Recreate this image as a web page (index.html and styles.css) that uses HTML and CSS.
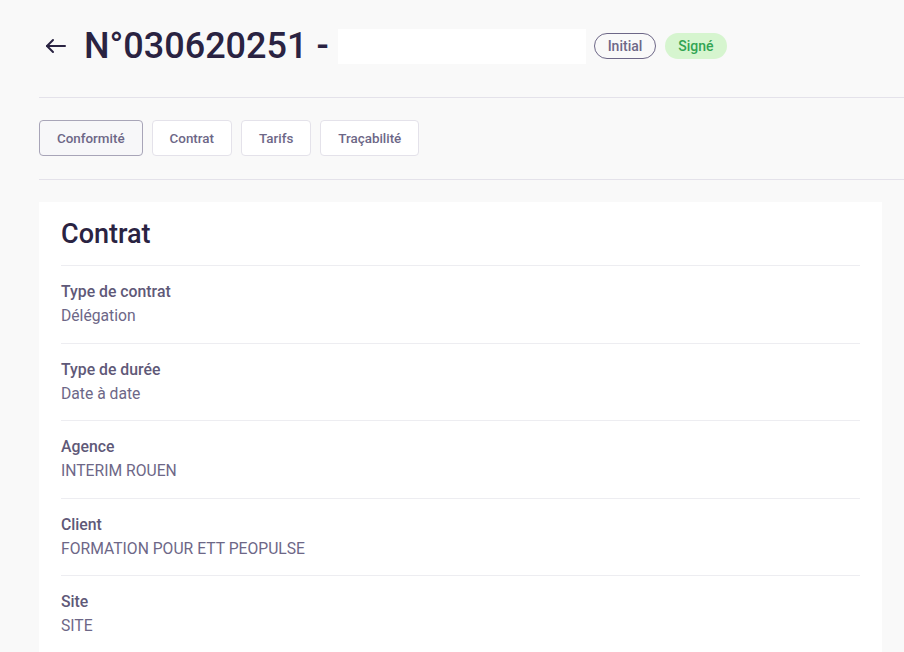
FILE: index.html
```html
<!DOCTYPE html>
<html lang="fr">
<head>
  <meta charset="UTF-8" />
  <meta name="viewport" content="width=device-width, initial-scale=1.0"/>
  <title>Contrat N°030620251</title>
  <link rel="stylesheet" href="styles.css">
</head>
<body>
  <main class="page">
    <header class="page-header">
      <a class="back-link" href="#" aria-label="Retour">
        <svg width="24" height="24" viewBox="0 0 24 24" fill="none" stroke="currentColor" stroke-width="2" stroke-linecap="round" stroke-linejoin="round">
          <line x1="21" y1="12" x2="3" y2="12"/>
          <polyline points="9,6 3,12 9,18"/>
        </svg>
      </a>
      <h1 class="page-title">N°030620251 -</h1>
      <div class="title-input"></div>
      <span class="badge badge-outline">Initial</span>
      <span class="badge badge-success">Signé</span>
    </header>

    <nav class="tabs">
      <button class="tab active">Conformité</button>
      <button class="tab">Contrat</button>
      <button class="tab">Tarifs</button>
      <button class="tab">Traçabilité</button>
    </nav>

    <section class="card">
      <h2 class="card-title">Contrat</h2>
      <div class="field">
        <div class="field-label">Type de contrat</div>
        <div class="field-value">Délégation</div>
      </div>
      <div class="field">
        <div class="field-label">Type de durée</div>
        <div class="field-value">Date à date</div>
      </div>
      <div class="field">
        <div class="field-label">Agence</div>
        <div class="field-value">INTERIM ROUEN</div>
      </div>
      <div class="field">
        <div class="field-label">Client</div>
        <div class="field-value">FORMATION POUR ETT PEOPULSE</div>
      </div>
      <div class="field">
        <div class="field-label">Site</div>
        <div class="field-value">SITE</div>
      </div>
    </section>
  </main>
</body>
</html>
```

FILE: styles.css
```css
:root {
  --bg-color: #f9f9f9;
  --title-color: #2a2342;
  --label-color: #5f5978;
  --value-color: #6d6787;
  --line-color: #e4e2ea;
  --row-line: #ededf1;
}

* {
  margin: 0;
  padding: 0;
  box-sizing: border-box;
  font-family: Roboto, 'Liberation Sans', sans-serif;
}

body {
  background-color: var(--bg-color);
  color: var(--label-color);
  overflow: hidden;
}

.page {
  padding-left: 39px;
}

.page-header {
  display: flex;
  align-items: center;
  height: 98px;
  padding-bottom: 5px;
  border-bottom: 1px solid var(--line-color);
}

.back-link {
  display: flex;
  color: var(--title-color);
  margin-left: 5px;
  margin-right: 16px;
}

.page-title {
  font-size: 36px;
  font-weight: 500;
  color: var(--title-color);
}

.title-input {
  width: 248px;
  height: 35px;
  background: #fff;
  margin-left: 9px;
  margin-right: 8px;
}

.badge {
  display: inline-flex;
  align-items: center;
  height: 26px;
  padding: 0 13px;
  border-radius: 13px;
  font-size: 14px;
  font-weight: 500;
}

.badge-outline {
  border: 1px solid var(--value-color);
  color: var(--value-color);
  padding: 0 13px;
}

.badge-success {
  background: #d6f5cf;
  color: #32a453;
  margin-left: 9px;
}

.tabs {
  display: flex;
  gap: 9px;
  padding: 22px 0 23px;
  border-bottom: 1px solid var(--line-color);
}

.tab {
  height: 36px;
  padding: 0 17px;
  background: #fff;
  border: 1px solid var(--line-color);
  border-radius: 4px;
  font-size: 13.4px;
  font-weight: 500;
  color: var(--value-color);
  cursor: pointer;
}

.tab.active {
  background: #f7f7f9;
  border-color: #a8a5b8;
}

.card {
  background: #fff;
  margin: 22px 22px 0 0;
  padding: 16px 22px 0;
  min-height: 460px;
}

.card-title {
  font-size: 27px;
  font-weight: 500;
  line-height: 32px;
  color: var(--title-color);
  padding-bottom: 15px;
  border-bottom: 1px solid var(--row-line);
}

.field {
  padding: 14px 0 14.5px;
  border-bottom: 1px solid var(--row-line);
}

.field-label {
  font-size: 15.8px;
  font-weight: 500;
  line-height: 24px;
  color: var(--label-color);
}

.field-value {
  font-size: 15.7px;
  line-height: 24px;
  color: var(--value-color);
}
```
